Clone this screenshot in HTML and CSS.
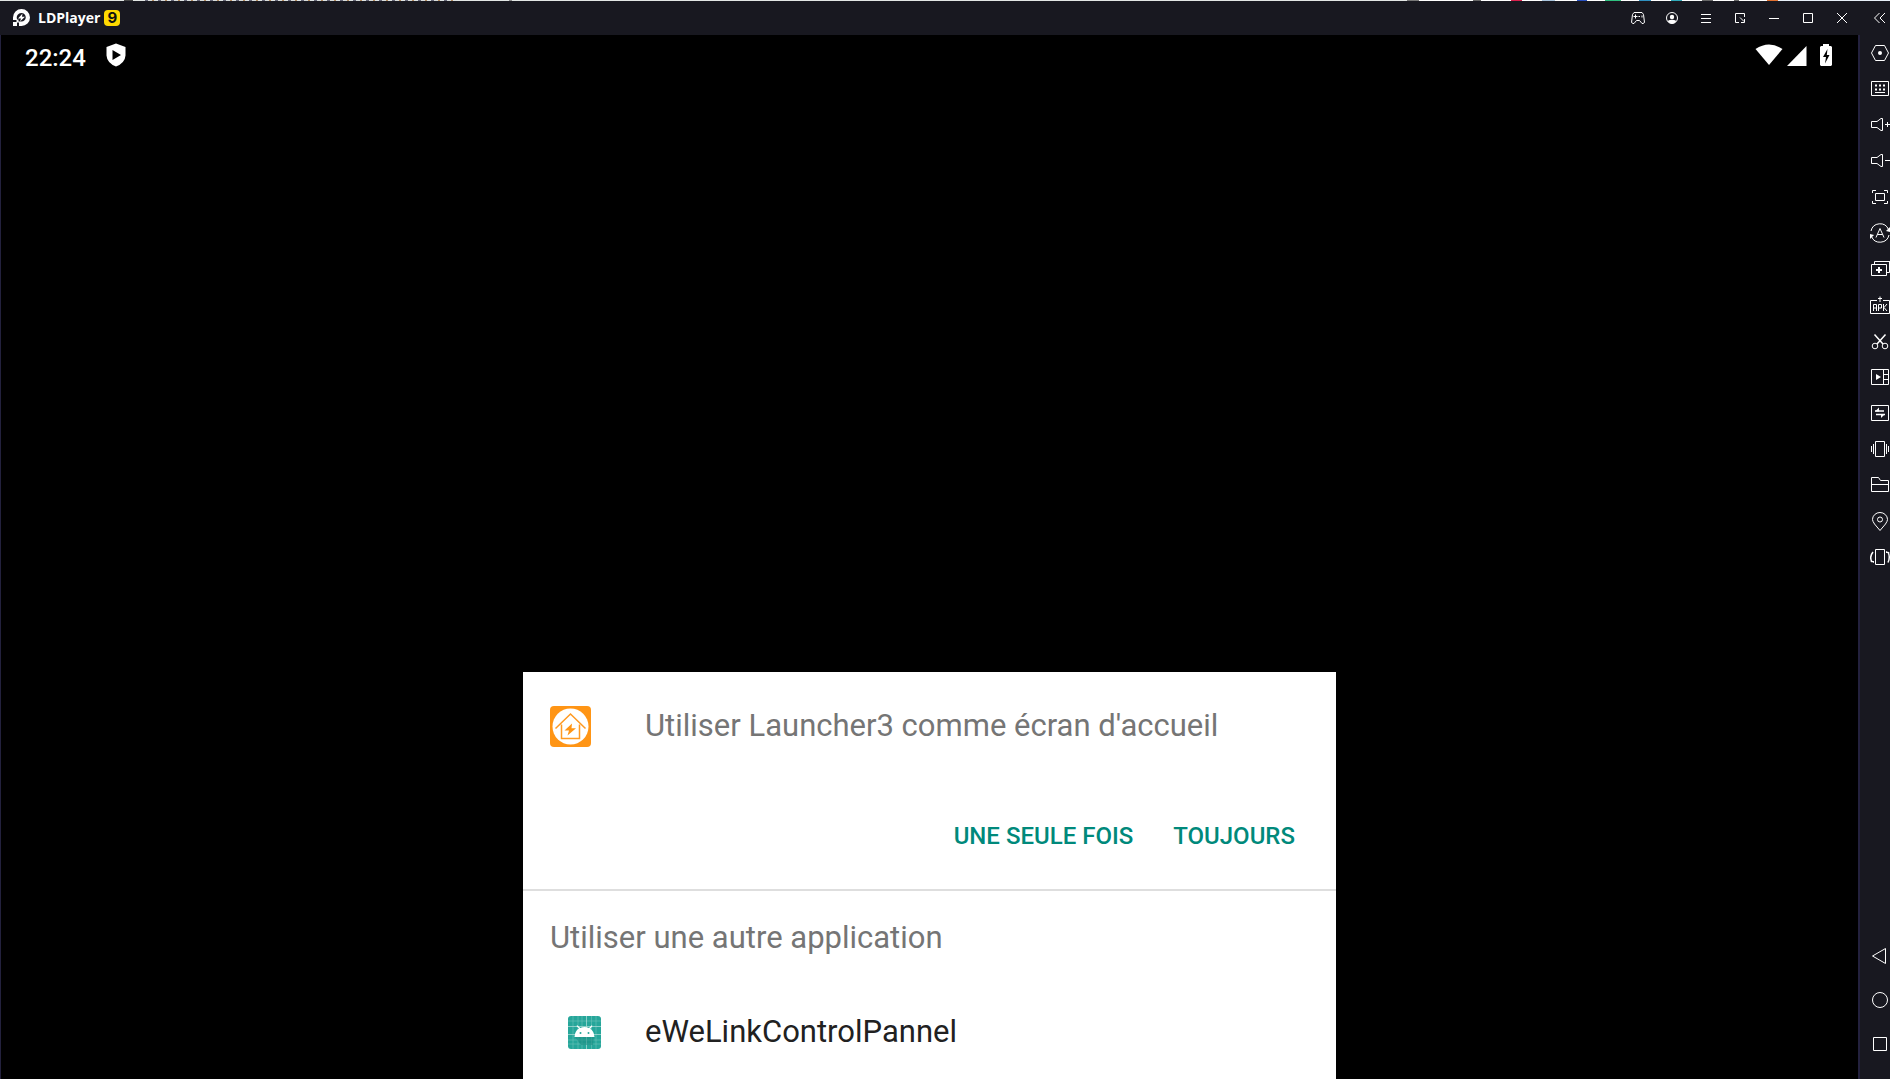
FILE: index.html
```html
<!DOCTYPE html>
<html lang="fr">
<head>
<meta charset="utf-8">
<title>LDPlayer 9</title>
<link rel="stylesheet" href="styles.css">
</head>
<body>
<div class="desktop-edge"></div>
<div class="window">
  <div class="main">
    <header class="titlebar">
      <svg class="logo" width="18" height="18" viewBox="0 0 18 18"><path fill="#fff" fill-rule="evenodd" d="M9.500 0A8.500 8.500 0 0 1 9.500 17H7V13.500H4.500V11H1V8.500A8.500 8.500 0 0 1 9.500 0ZM9.500 4A4.700 4.700 0 0 0 5 10.500H6.500V12.500H9.500A4.250 4.250 0 0 0 9.500 4Z"/><path fill="#fff" d="M10.500 4.500 6 9.500H9L8 12.500 13 7.800H10ZM1 13H5V17H1Z"/></svg>
      <h1 class="app-name">LDPlayer</h1>
      <span class="badge">9</span>
      <nav class="window-buttons">
        <button type="button" aria-label="Gamepad"><svg viewBox="0 0 16 16"><path d="M4 2.500h8l1.500 2 1 8-1.500 1h-1L9.500 10.500h-3L4 13.500H3l-1.500-1 1-8zM3.500 6.500h4M5.500 4.500v4M8.500 6.500h1.500M12 5.500v2"/></svg></button>
        <button type="button" aria-label="Compte"><svg viewBox="0 0 16 16"><circle cx="8" cy="8" r="5.500"/><circle cx="8" cy="7" r="2.200" fill="#fff" stroke="none"/><path fill="#fff" stroke="none" d="M3.500 11Q8 8.500 12.500 11Q11 13.500 8 13.700Q5 13.500 3.500 11Z"/></svg></button>
        <button type="button" aria-label="Menu"><svg viewBox="0 0 16 16"><path d="M3 4.500h10M3 8.500h10M3 12.500h10"/></svg></button>
        <button type="button" aria-label="Mini"><svg viewBox="0 0 16 16"><path d="M7 12.500H3.500v-9h9V7M8 7.500l4 4M9 12.500h3.500V9"/></svg></button>
        <button type="button" aria-label="Réduire"><svg viewBox="0 0 16 16"><path d="M3 8.500h10"/></svg></button>
        <button type="button" aria-label="Agrandir"><svg viewBox="0 0 16 16"><path d="M3.500 3.500h9v9h-9z"/></svg></button>
        <button type="button" aria-label="Fermer"><svg viewBox="0 0 16 16"><path d="M3 3l10 10M13 3L3 13"/></svg></button>
      </nav>
    </header>
    <main class="screen">
      <div class="status">
        <time class="clock">22:24</time>
        <svg class="shield" width="20" height="24" viewBox="0 0 20 24"><path fill="#fff" fill-rule="evenodd" d="M10 .500 19.500 4v8.500Q19 20 10 23.500Q1 20 .500 12.500V4ZM6.500 7v10l8.500-5Z"/></svg>
        <div class="signals">
          <svg width="28" height="24" viewBox="0 0 28 24"><path fill="#fff" d="M.500 6Q14-3 27.500 6L14 22Z"/></svg>
          <svg width="20" height="24" viewBox="0 0 20 24"><path fill="#fff" d="M19.500 3v20H0Z"/></svg>
          <svg class="battery" width="14" height="24" viewBox="0 0 14 24"><path fill="#fff" fill-rule="evenodd" d="M4 1h6v2h2l1 1v18l-1 1H2l-1-1V4l1-1h2ZM8.500 6 4 14h3l-1 6.500L10.500 12H7.800Z"/></svg>
        </div>
      </div>
      <section class="chooser">
        <div class="chooser-head">
          <svg class="home-icon" width="41" height="41" viewBox="0 0 41 41"><rect width="41" height="41" rx="4" fill="#ff9515"/><circle cx="20.500" cy="20.500" r="18" fill="#fff"/><g fill="none" stroke="#ff9a22" stroke-width="1.500"><path d="M5.500 22.500 20.500 8l15 14.500"/><path d="M11.500 18.500v14h18v-14"/></g><path fill="#ff9515" d="M22 17.500 14.500 24.500H19L17.500 29.500 26 22.300H21.500Z"/></svg>
          <h2>Utiliser Launcher3 comme écran d'accueil</h2>
        </div>
        <div class="actions">
          <button type="button">UNE SEULE FOIS</button>
          <button type="button">TOUJOURS</button>
        </div>
        <h3 class="other">Utiliser une autre application</h3>
        <button class="app-row" type="button">
          <svg class="app-icon" width="33" height="33" viewBox="0 0 33 33"><rect width="33" height="33" rx="3" fill="#26a69a"/><path stroke="#6cc3ba" stroke-width=".6" d="M5 0v33M10 0v33M14 0v33M23.500 0v33M28 0v33M0 5h33M0 24h33M0 28h33"/><path stroke="#a4d9d4" stroke-width=".8" d="M18.500 0v33M0 10.500h33M0 18.500h33"/><path fill="#1b8e83" d="m7 21 6 8h12l1-8z" opacity=".6"/><path fill="#fff" d="M6.500 21Q7 14.500 11 12.500L8.500 10l.8-.7 3 2.700Q16.500 10 21 12L23.700 9.300l.8.700L22.300 12.700Q26 15 26.500 21Z"/><circle cx="12.500" cy="17" r="1" fill="#26a69a"/><circle cx="20.500" cy="17" r="1" fill="#26a69a"/></svg>
          <span>eWeLinkControlPannel</span>
        </button>
      </section>
    </main>
  </div>
  <aside class="toolbar">
    <button class="collapse" type="button" aria-label="Replier"><svg viewBox="0 0 20 20"><path d="M9.500 5 4.500 10l5 5M15 5l-5 5 5 5"/></svg></button>
    <button type="button" aria-label="Paramètres"><svg viewBox="0 0 20 20"><path d="M5.500 2.500h9l4 7.500-4 7.500h-9L1.500 10z"/><circle cx="10" cy="10" r="2" fill="#fff" stroke="none"/></svg></button>
    <button type="button" aria-label="Clavier"><svg viewBox="0 0 20 20"><path d="M1.500 2.500h17v14h-17z"/><path stroke-width="2" d="M5 6.500h2M9 6.500h2M13 6.500h2M5 10.500h2M9 10.500h2M13 10.500h2"/><path d="M5 13.500h10"/></svg></button>
    <button type="button" aria-label="Volume plus"><svg viewBox="0 0 20 20"><path d="M1.500 6.500H7l4-3h1.500v12H11l-4-3H1.500zM15 9.500h5M17.500 7v5"/></svg></button>
    <button type="button" aria-label="Volume moins"><svg viewBox="0 0 20 20"><path d="M1.500 6.500H7l4-3h1.500v12H11l-4-3H1.500zM15 9.500h5"/></svg></button>
    <button type="button" aria-label="Plein écran"><svg viewBox="0 0 20 20"><path d="M2.500 6V3.500H6M14 3.500h3.500V6M2.500 14v2.500H6M14 16.500h3.500V14M5.500 6.500h9v7h-9z"/></svg></button>
    <button type="button" aria-label="Rotation"><svg viewBox="0 0 20 20"><path d="M1 8A9.200 9.200 0 0 1 18.500 6.500M19 12A9.200 9.200 0 0 1 1.500 13.500M6 14.500l4-9 4 9M7.500 11.500h5"/><path fill="#fff" stroke="none" d="M20 4v5l-4-1ZM0 11l4 1-4 4Z"/></svg></button>
    <button type="button" aria-label="Multi-instances"><svg viewBox="0 0 20 20"><path d="M1.500 5.500h15v11h-15zM4.500 5V2.500H20M19.500 2.500v11H17"/><path stroke-width="2" d="M6 11h6M9 8v6"/></svg></button>
    <button type="button" aria-label="Installer un APK"><svg viewBox="0 0 20 20"><path d="M7 5.500H.500v13h19v-13H13M10 1.500V7M8 3.500h4M3.500 16V9.500h3V16M3.500 13h3M8.500 16V9.500h3v3.500h-3M13.500 9v7M17 9l-3 3.500L17 16"/></svg></button>
    <button type="button" aria-label="Capture"><svg viewBox="0 0 20 20"><circle cx="5" cy="15" r="2.800"/><circle cx="15" cy="15" r="2.800"/><path stroke-width="1.500" d="M4.500 3.500 13 13M15.500 3.500 7 13"/></svg></button>
    <button type="button" aria-label="Enregistrer"><svg viewBox="0 0 20 20"><path d="M1.500 2.500h17v15h-17zM13.500 2.500v15M13.500 7.500h5M13.500 12.500h5"/><path fill="#fff" stroke="none" d="M6 7v6l5-3Z"/></svg></button>
    <button type="button" aria-label="Synchroniser"><svg viewBox="0 0 20 20"><path d="M1.500 2.500h17v15h-17z"/><path stroke-width="1.500" d="M5 8h9M6 11.500h9"/><path fill="#fff" stroke="none" d="M5 8.500 9 4.500v4ZM15 11l-4 4v-4Z"/></svg></button>
    <button type="button" aria-label="Secouer"><svg viewBox="0 0 20 20"><path d="M5.500 2.500h9v15h-9zM3.500 5v10M1.500 7v6M16.500 5v10M18.500 7v6"/></svg></button>
    <button type="button" aria-label="Dossier"><svg viewBox="0 0 20 20"><path d="M1.500 16.500v-14h7l2 3h8v11zM1.500 9.500h17"/></svg></button>
    <button type="button" aria-label="Position"><svg viewBox="0 0 20 20"><path d="M10 19.500 4.500 13Q2.500 10 2.500 8.500A7.500 7 0 0 1 17.500 8.500Q17.500 10 15.500 13Z"/><circle cx="10" cy="8.500" r="2.500"/></svg></button>
    <button type="button" aria-label="Pivoter"><svg viewBox="0 0 20 20"><path d="M5.500 2.500h9v15h-9z"/><path stroke-width="1.500" d="M3 5Q-1 10 2 15M18 15.500Q20.500 10 18 5"/><path fill="#fff" stroke="none" d="M0 14h4v2ZM20 6h-4V4Z"/></svg></button>
    <div class="nav-keys">
      <button type="button" aria-label="Retour"><svg viewBox="0 0 20 20"><path d="M15.500 2.500v15L2.500 10z"/></svg></button>
      <button type="button" aria-label="Accueil"><svg viewBox="0 0 20 20"><circle cx="10" cy="10" r="7.500"/></svg></button>
      <button type="button" aria-label="Récents"><svg viewBox="0 0 20 20"><path d="M3.500 3.500h13v13h-13z"/></svg></button>
    </div>
  </aside>
</div>
</body>
</html>
```
FILE: styles.css
```css
* {
  box-sizing: border-box;
}

body {
  margin: 0;
  height: 100vh;
  display: flex;
  flex-direction: column;
  overflow: hidden;
  background: #181820;
  color: #fff;
  font-family: Roboto, "Liberation Sans", sans-serif;
}

button {
  border: 0;
  padding: 0;
  margin: 0;
  background: none;
  color: inherit;
  font: inherit;
}

h1,
h2,
h3 {
  margin: 0;
  font-weight: 400;
}

svg {
  display: block;
  flex: none;
}

/* Sliver of the browser window behind: bookmark text on the left, favicons on the right */
.desktop-edge {
  flex: none;
  height: 1px;
  background:
    linear-gradient(90deg, #444 0 9px, transparent 9px 385px, #888 385px 388px, transparent 388px) 124px 0 / 390px 1px no-repeat,
    repeating-linear-gradient(90deg, #667 0 3px, #d8dcdc 3px 7px, #b08a60 7px 9px, #dfe4e4 9px 13px) 145px 0 / 312px 1px no-repeat,
    linear-gradient(90deg, #777 0 12px, #fff 12px 66px, #666 66px 74px, #fff 74px 104px, #d8204c 104px 115px, #fff 115px 135px, #a9c4dc 135px 148px, #fff 148px 170px, #2850c0 170px 180px, #fff 180px 198px, #30c080 198px 214px, #fff 214px 232px, #3090c0 232px 244px, #fff 244px 264px, #30a8b8 264px 275px, #fff 275px 295px, #666 295px 306px, #fff 306px 327px, #666 327px 332px, #fff 332px 360px, #e07030 360px 371px, #e8f0f8 371px) 1407px 0 / 483px 1px no-repeat,
    #e2e6e4;
}

.window {
  flex: 1;
  min-height: 0;
  display: flex;
}

.main {
  flex: 1;
  min-width: 0;
  display: flex;
  flex-direction: column;
}

.titlebar {
  flex: none;
  height: 34px;
  display: flex;
  align-items: center;
  padding: 0 1px 0 12px;
}

.app-name {
  margin-left: 8px;
  font: 700 14px/20px "Open Sans", sans-serif;
}

.badge {
  width: 16px;
  height: 16px;
  margin-left: 4px;
  border-radius: 4px;
  background: #ffd900;
  color: #111;
  font: 700 15px/16px Inter, sans-serif;
  text-align: center;
}

.window-buttons {
  margin-left: auto;
  display: flex;
}

.window-buttons button {
  width: 34px;
  height: 34px;
  display: grid;
  place-items: center;
}

.window-buttons svg {
  width: 16px;
  height: 16px;
}

.window-buttons svg,
.toolbar svg {
  fill: none;
  stroke: #fff;
  stroke-width: 1px;
}

.screen {
  flex: 1;
  min-height: 0;
  display: flex;
  flex-direction: column;
  border-left: 1px solid #23213d;
  border-right: 2px solid #23213d;
  background: #000;
}

.status {
  height: 40px;
  display: flex;
  align-items: flex-start;
  padding: 8px 25px 0 24px;
}

.clock {
  padding-top: 1px;
  font-size: 24px;
  line-height: 28px;
  font-weight: 500;
}

.shield {
  margin-left: 20px;
}

.signals {
  margin-left: auto;
  display: flex;
  gap: 4px;
}

.battery {
  margin-left: 8px;
}

.chooser {
  width: 813px;
  max-width: 100%;
  margin: auto auto 0;
  background: #fff;
  color: #757575;
  font-size: 31px;
  line-height: 38px;
}

.chooser h2,
.chooser h3 {
  font-size: 31px;
}

.chooser-head {
  height: 108px;
  display: flex;
  align-items: center;
  gap: 54px;
  padding-left: 27px;
}

.actions {
  height: 109px;
  display: flex;
  align-items: center;
  justify-content: flex-end;
  gap: 40px;
  padding: 2px 41px 0 0;
  color: #00897b;
  font-size: 24px;
  line-height: 28px;
  font-weight: 500;
}

.other {
  height: 96px;
  display: flex;
  align-items: center;
  padding-left: 27px;
  border-top: 2px solid #dedede;
}

.app-row {
  width: 100%;
  height: 94px;
  display: flex;
  align-items: center;
  gap: 44px;
  padding-left: 45px;
  color: #212121;
}

.toolbar {
  width: 30px;
  flex: none;
  display: flex;
  flex-direction: column;
  align-items: flex-end;
}

.toolbar button {
  width: 20px;
  height: 36px;
  display: grid;
  place-items: center;
}

.toolbar svg {
  width: 20px;
  height: 20px;
}

.toolbar .collapse {
  height: 34px;
}

.nav-keys {
  margin-top: auto;
  padding-bottom: 13px;
}

.nav-keys button {
  height: 44px;
}
```
